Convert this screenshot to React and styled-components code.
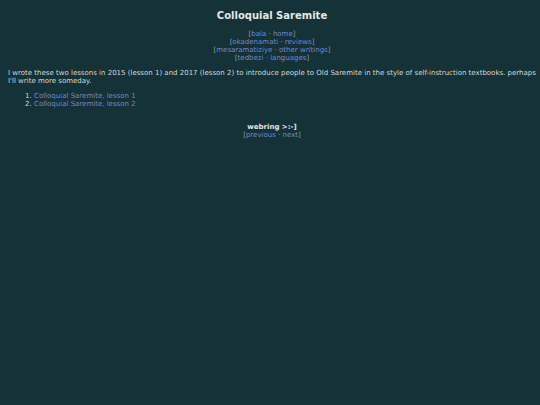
import styled, { createGlobalStyle } from "styled-components";

const GlobalStyle = createGlobalStyle`
  html, body {
    margin: 0;
    padding: 0;
    background: #153238;
  }
  body {
    font-family: "DejaVu Sans", Verdana, sans-serif;
    font-size: 7px;
    line-height: 8px;
    color: #d4d8d8;
  }
`;

const Page = styled.div`
  min-height: 405px;
  padding: 8px 4px 8px 8px;
  box-sizing: border-box;
`;

const Title = styled.h1`
  margin: 2px 0 8px;
  text-align: center;
  font-size: 10px;
  line-height: 12px;
  font-weight: bold;
  color: #e4e6e6;
`;

const Nav = styled.nav`
  text-align: center;
  margin-bottom: 7px;
`;

const NavLine = styled.div`
  color: #8a9aa6;
`;

const Link = styled.a`
  color: #7488c8;
  text-decoration: none;
`;

const Para = styled.p`
  margin: 0 0 7px;
`;

const List = styled.ol`
  margin: 0 0 15px;
  padding-left: 26px;
`;

const Webring = styled.div`
  text-align: center;
`;

const Bold = styled.div`
  font-weight: bold;
  color: #e4e6e6;
`;

const BracketLinks = ({ items }) => (
  <NavLine>
    [
    {items.map((t, i) => (
      <span key={t}>
        {i > 0 && " · "}
        <Link href="#">{t}</Link>
      </span>
    ))}
    ]
  </NavLine>
);

export default function App() {
  return (
    <Page>
      <GlobalStyle />
      <Title>Colloquial Saremite</Title>
      <Nav>
        <BracketLinks items={["bala", "home"]} />
        <BracketLinks items={["okadenamati", "reviews"]} />
        <BracketLinks items={["mesaramatiziye", "other writings"]} />
        <BracketLinks items={["tedbezi", "languages"]} />
      </Nav>
      <Para>
        I wrote these two lessons in 2015 (lesson 1) and 2017 (lesson 2) to
        introduce people to Old Saremite in the style of self-instruction
        textbooks. perhaps I'll write more someday.
      </Para>
      <List>
        <li>
          <Link href="#">Colloquial Saremite, lesson 1</Link>
        </li>
        <li>
          <Link href="#">Colloquial Saremite, lesson 2</Link>
        </li>
      </List>
      <Webring>
        <Bold>webring &gt;:-]</Bold>
        <BracketLinks items={["previous", "next"]} />
      </Webring>
    </Page>
  );
}
